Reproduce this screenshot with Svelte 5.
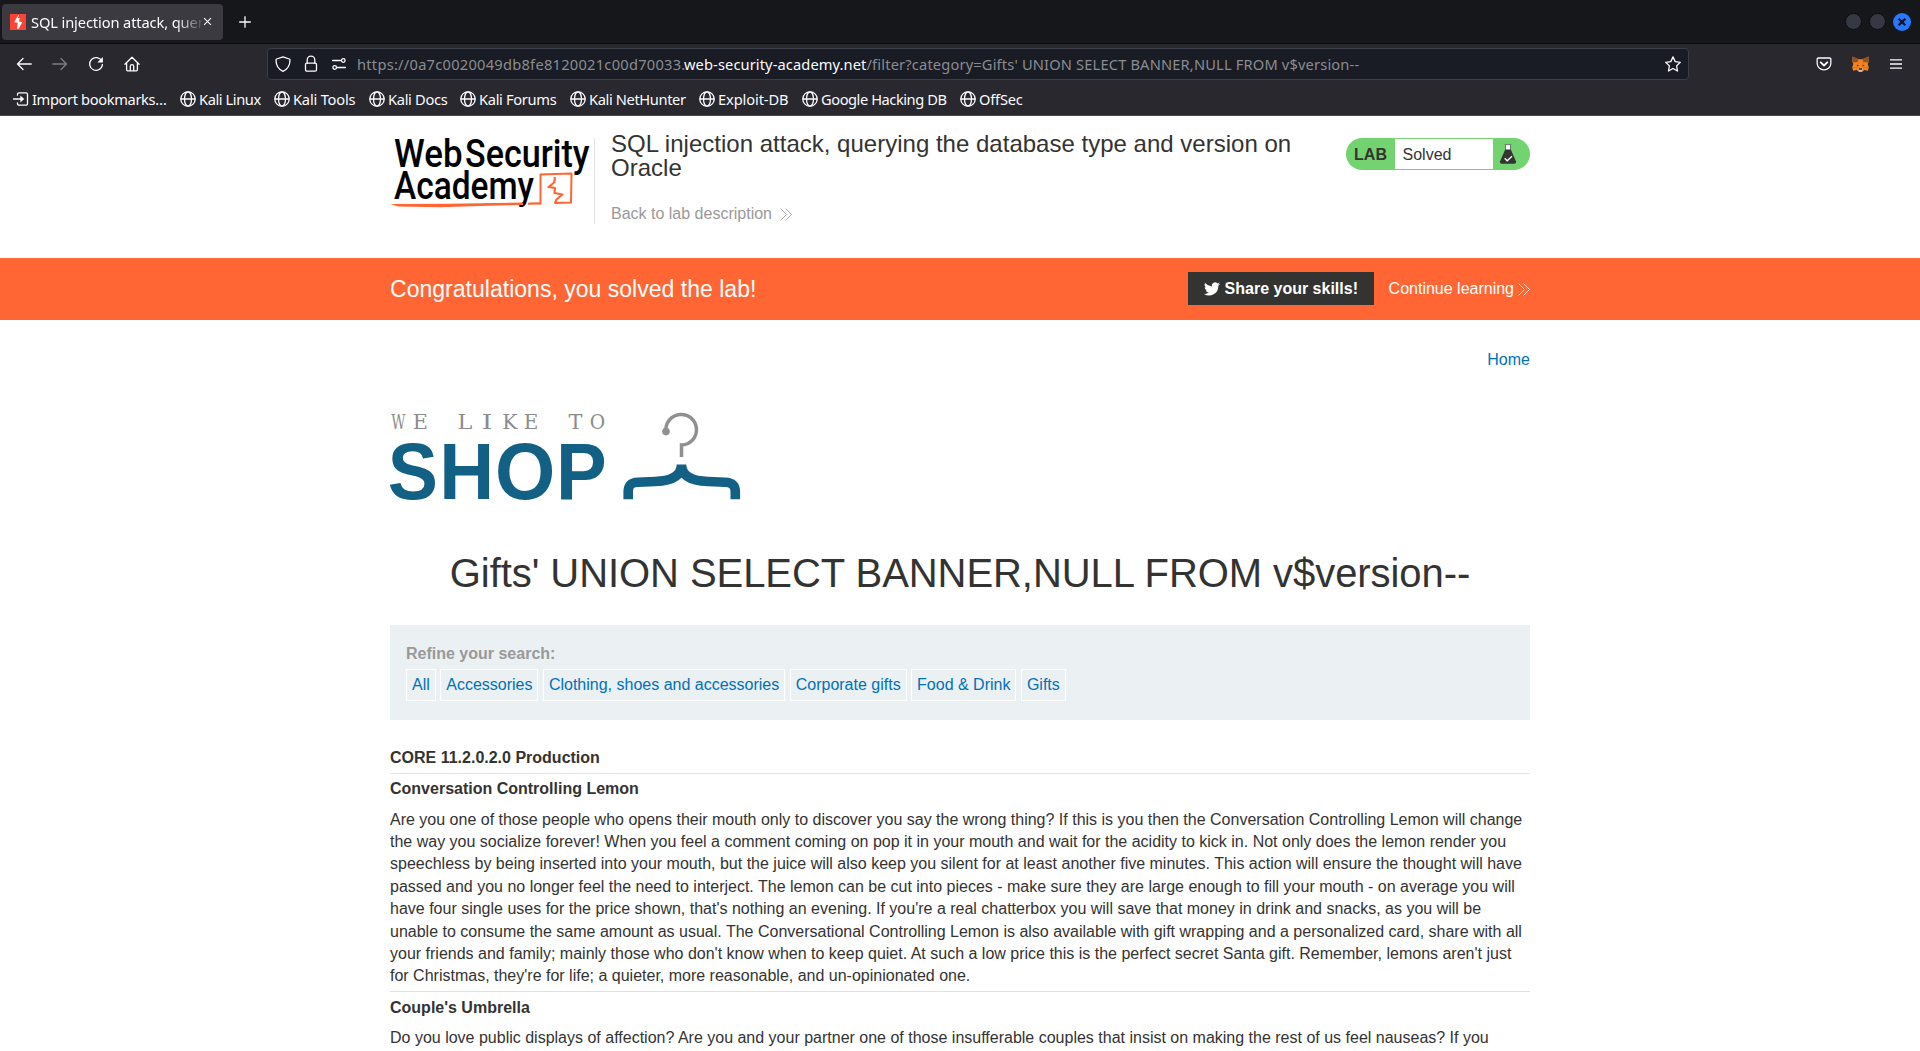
<script>
  const bookmarks = [
    { label: 'Kali Linux', width: 94, spacing: -0.42 },
    { label: 'Kali Tools', width: 95, spacing: -0.2 },
    { label: 'Kali Docs', width: 91, spacing: -0.32 },
    { label: 'Kali Forums', width: 110, spacing: -0.33 },
    { label: 'Kali NetHunter', width: 129, spacing: -0.38 },
    { label: 'Exploit-DB', width: 103, spacing: -0.12 },
    { label: 'Google Hacking DB', width: 158, spacing: -0.45 },
    { label: 'OffSec', width: 64, spacing: -0.2 }
  ];

  const tagline = [
    { char: 'W', x: 1.3, width: 14.2 },
    { char: 'E', x: 22.8, width: 15.2 },
    { char: 'L', x: 67.5, width: 14.8 },
    { char: 'I', x: 91.7, width: 10.6 },
    { char: 'K', x: 112.2, width: 15.2 },
    { char: 'E', x: 133.7, width: 14.6 },
    { char: 'T', x: 178.5, width: 14 },
    { char: 'O', x: 199.8, width: 15.4 }
  ];

  const wordmark = [
    { char: 'S', x: -2.3, width: 50.2 },
    { char: 'H', x: 49.2, width: 54.9 },
    { char: 'O', x: 105.1, width: 60.3 },
    { char: 'P', x: 165.9, width: 50.7 }
  ];

  const categories = ['All', 'Accessories', 'Clothing, shoes and accessories', 'Corporate gifts', 'Food & Drink', 'Gifts'];

  const lemon = [
    'Are you one of those people who opens their mouth only to discover you say the wrong thing? If this is you then the Conversation Controlling Lemon will change',
    'the way you socialize forever! When you feel a comment coming on pop it in your mouth and wait for the acidity to kick in. Not only does the lemon render you',
    'speechless by being inserted into your mouth, but the juice will also keep you silent for at least another five minutes. This action will ensure the thought will have',
    'passed and you no longer feel the need to interject. The lemon can be cut into pieces - make sure they are large enough to fill your mouth - on average you will',
    "have four single uses for the price shown, that's nothing an evening. If you're a real chatterbox you will save that money in drink and snacks, as you will be",
    'unable to consume the same amount as usual. The Conversational Controlling Lemon is also available with gift wrapping and a personalized card, share with all',
    "your friends and family; mainly those who don't know when to keep quiet. At such a low price this is the perfect secret Santa gift. Remember, lemons aren't just",
    "for Christmas, they're for life; a quieter, more reasonable, and un-opinionated one."
  ].join(' ');

  const umbrella =
    'Do you love public displays of affection? Are you and your partner one of those insufferable couples that insist on making the rest of us feel nauseas? If you';
</script>

<div class="window">
  <div class="tabbar">
    <div class="tab">
      <svg class="favicon" viewBox="0 0 16 16">
        <rect width="16" height="16" fill="#ff4136" />
        <path d="M8.2 1 4.2 8.2l3.6.5L7 15l1.7-.2 3.600-6.600-3.200-.7L9.700 4H7.800L9 1z" fill="#fff" />
      </svg>
      <span class="tab-title">SQL injection attack, query</span>
      <svg class="tab-close" viewBox="0 0 10 10"><path d="m1.2 1.2 7.6 7.6m0-7.6-7.6 7.6" /></svg>
    </div>
    <svg class="new-tab" viewBox="0 0 12 12"><path d="M6 .2v11.6M.2 6h11.6" /></svg>
    <div class="controls">
      <i></i><i></i>
      <svg viewBox="0 0 18 18">
        <circle cx="9" cy="9" r="9" fill="#2777ff" />
        <path d="m5.7 5.7 6.6 6.6m0-6.6-6.6 6.6" stroke="#0d1526" stroke-width="2.3" />
      </svg>
    </div>
  </div>

  <div class="navbar">
    <div class="nav-buttons">
      <svg viewBox="0 0 16 16"><path d="M15.2 8H1.5M7 2.5 1.5 8 7 13.5" /></svg>
      <svg viewBox="0 0 16 16" class="dim"><path d="M.8 8h13.7M9 2.5 14.500 8 9 13.5" /></svg>
      <svg viewBox="0 0 16 16">
        <path d="M13.8 5.200A6.400 6.400 0 1 0 14.400 8.500" />
        <path d="M14.900 1v5.600H9.300z" class="solid" />
      </svg>
      <svg viewBox="0 0 16 16">
        <path d="M.9 8.300 8 1.200l7.100 7.100M2.600 7v6.800a1 1 0 0 0 1 1h8.800a1 1 0 0 0 1-1V7M6.300 14.500v-4.200a1.700 1.700 0 0 1 3.400 0v4.200" />
      </svg>
    </div>
    <div class="urlbar">
      <svg viewBox="0 0 16 16" class="shield"><path d="M8 .8 14.300 3c.6.2.7.5.7 1-.1 5.500-2.200 9.300-7 11.300C3.200 13.300 1.100 9.500 1 4c0-.5.1-.8.7-1z" /></svg>
      <svg viewBox="0 0 16 16" class="lock"><path d="M4.200 7.200V4a3.800 3.800 0 0 1 7.600 0v3.200" /><rect x="2.500" y="7.200" width="11" height="8" rx="1.400" /></svg>
      <svg viewBox="0 0 16 16" class="perms"><path d="M1.500 4.500H10M6 11.500h8.500" /><circle cx="12.300" cy="4.500" r="1.800" /><circle cx="3.700" cy="11.500" r="1.800" /></svg>
      <div class="url"><span class="u1">https://0a7c0020049db8fe8120021c00d70033.</span><span class="u2">web-security-academy.net</span><span class="u3">/filter?category=Gifts' UNION SELECT BANNER,NULL FROM v$version--</span></div>
      <svg viewBox="0 0 16 16" class="star"><path d="m8 .9 2.200 4.700 5.100.7-3.700 3.600.9 5.100L8 12.500 3.500 15l.9-5.100L.7 6.300l5.100-.7z" /></svg>
    </div>
    <div class="tools">
      <svg viewBox="0 0 16 16" class="pocket"><path d="M2.300 2h11.400a1.100 1.100 0 0 1 1.100 1.100V7.500a6.800 6.300 0 0 1-13.600 0V3.100A1.100 1.100 0 0 1 2.300 2z" /><path d="M4.700 6.300 8 9.500l3.300-3.200" stroke-width="1.800" /></svg>
      <svg viewBox="0 0 17 16" class="fox">
        <path d="M.6.600 6.300 3.200h4.400L16.400.6l.3 5-1 2.400 1.100 3.500-1 3.300-3.500-.9-2 1.900H6.700l-2-1.900-3.500.9-1-3.300L1.300 8 .3 5.600z" fill="#f5841f" />
        <path d="M.6.600 6.300 3.200 5.700 6 1.500 6.600.3 5.600zM16.400.6l-5.700 2.600.6 2.800 4.200.6 1.200-1z" fill="#92502a" />
        <path d="m6.300 3.200-.8 8.600-4.400-.3M10.700 3.200l.8 8.600 4.400-.3" fill="none" stroke="#d76a18" stroke-width=".7" />
        <path d="m4.300 8.900 2.200.1-.3 1.200zm8.400 0-2.200.1.3 1.200z" fill="#3b2a20" />
        <path d="m6.700 12.500.5-.5h2.600l.5.5.2 2.400-.8.900H7.300l-.8-.9z" fill="#d5c5b6" />
        <path d="M7 12.200h3l.2 1.500H6.800z" fill="#242020" />
      </svg>
      <svg viewBox="0 0 12 10" class="menu"><path d="M0 .8h12M0 5h12M0 9.200h12" /></svg>
    </div>
  </div>

  <div class="bookmarks">
    <div class="bookmark import">
      <svg viewBox="0 0 16 16"><path d="M4.500 4.200V3.300A1.500 1.500 0 0 1 6 1.800h7a1.500 1.500 0 0 1 1.500 1.500v9.400a1.500 1.500 0 0 1-1.500 1.500H6a1.500 1.500 0 0 1-1.500-1.500v-.9M.5 8H9" /><path d="M7.300 4.600 11.300 8l-4 3.400z" class="solid" /></svg>
      <span>Import bookmarks…</span>
    </div>
    {#each bookmarks as item}
      <div class="bookmark" style:width="{item.width}px" style:letter-spacing="{item.spacing}px">
        <svg viewBox="0 0 16 16"><circle cx="8" cy="8" r="7.200" /><ellipse cx="8" cy="8" rx="3.500" ry="7.200" /><path d="M1 8h14" /></svg>
        <span>{item.label}</span>
      </div>
    {/each}
  </div>

  <div class="page">
    <header class="container lab-header">
      <svg class="logo" viewBox="0 0 200 72">
        <g font-family="Roboto" font-weight="500" font-size="38.500" fill="#000">
          <text x="4" y="29" textLength="68.500" lengthAdjust="spacingAndGlyphs">Web</text>
          <text x="75" y="29" textLength="124.500" lengthAdjust="spacingAndGlyphs">Security</text>
          <text x="4" y="61" textLength="140" lengthAdjust="spacingAndGlyphs">Academy</text>
        </g>
        <g fill="none" stroke="#ff6633" stroke-width="1.800" stroke-linejoin="round">
          <path d="M150.500 66.500V36.500l31-1-.5 29-16.500.5" stroke-width="2" />
          <path d="m165 39-.8 5.500-5.700 4.500 6.500 1-.5 5 8 1.500-6 5-1.500 3.500" stroke-width="2.200" />
        </g>
        <path d="M.5 66 60 65.800l73-1.300v2.500L90 67.900 50 69.200 8 68.500zM138.500 64.500l12-.3v2.400l-13 .2z" fill="#ff6633" />
      </svg>
      <div class="title">
        <h2>SQL injection attack, querying the database type and version on Oracle</h2>
        <a class="back">Back to lab description <svg viewBox="0 0 12 13"><path d="m.5.500 6 6-6 6M5.500.500l6 6-6 6" /></svg></a>
      </div>
      <div class="lab-status">
        <b>LAB</b>
        <span>Solved</span>
        <svg viewBox="0 0 16 20"><path d="M5.500 1v6L1 17.500h14L10.500 7V1" fill="#fff" /><path d="M4.700.6h6.600M5.500 1v5M10.500 1v5" stroke="#777" stroke-width="1" /><path d="M5.200 5.500h5.600L16 17.500q.5 2-1.500 2.200h-13Q-.5 19.500 0 17.500z" fill="#333332" /><path d="m4.700 14.300 2.500 2.500 4.800-4.600" fill="none" stroke="#fff" stroke-width="1.300" /></svg>
      </div>
    </header>

    <section class="banner">
      <div class="container banner-inner">
        <h4>Congratulations, you solved the lab!</h4>
        <div class="banner-actions">
          <a class="share"><svg viewBox="0 0 24 20"><path d="M24 2.400a10 10 0 0 1-2.800.8A5 5 0 0 0 23.300.400a10 10 0 0 1-3.100 1.200 4.900 4.900 0 0 0-8.400 4.500A14 14 0 0 1 1.700 1a4.900 4.900 0 0 0 1.500 6.500A4.900 4.900 0 0 1 1 6.900a4.900 4.900 0 0 0 3.900 4.900 5 5 0 0 1-2.200.1 4.900 4.900 0 0 0 4.600 3.400A9.900 9.900 0 0 1 0 17.400a14 14 0 0 0 21.500-12.400A10 10 0 0 0 24 2.400z" fill="#fff" /></svg>Share your skills!</a>
          <a class="continue">Continue learning<svg viewBox="0 0 12 13"><path d="m.5.500 6 6-6 6M5.500.500l6 6-6 6" /></svg></a>
        </div>
      </div>
    </section>

    <main class="container">
      <nav class="top-links"><a>Home</a></nav>
      <svg class="shop" viewBox="0 0 352 90">
        <g font-family="DejaVu Serif" font-size="20.500" fill="#8c8c8c">
          {#each tagline as letter}<text y="17" x={letter.x} textLength={letter.width} lengthAdjust="spacingAndGlyphs">{letter.char}</text>{/each}
        </g>
        <g font-family="Liberation Sans" font-weight="700" font-size="80" fill="#126084">
          {#each wordmark as letter}<text y="87.300" x={letter.x} textLength={letter.width} lengthAdjust="spacingAndGlyphs">{letter.char}</text>{/each}
        </g>
        <circle cx="276" cy="19.600" r="3.800" fill="#8e9091" />
        <path d="M276 19.600A15.300 15.300 0 1 1 291.500 33V45" fill="none" stroke="#8e9091" stroke-width="3.500" />
        <path d="M238.200 87.300V80C238.200 73 241 70.500 248 70.200L265 69.500C281 69 291.500 64 291.500 52.500 291.500 64 302 69 318 69.500L335 70.200C342 70.500 345.300 73 345.300 80V87.300" fill="none" stroke="#126084" stroke-width="9.600" stroke-linejoin="bevel" />
      </svg>
      <h1>Gifts' UNION SELECT BANNER,NULL FROM v$version--</h1>
      <section class="filters">
        <label>Refine your search:</label>
        <div class="links">
          {#each categories as category}<a>{category}</a>{/each}
        </div>
      </section>
      <div class="results">
        <div class="name">CORE 11.2.0.2.0 Production</div>
        <div class="name ruled">Conversation Controlling Lemon</div>
        <div class="text">{lemon}</div>
        <div class="name ruled">Couple's Umbrella</div>
        <div class="text">{umbrella}</div>
      </div>
    </main>
  </div>
</div>

<style>
  :global(body) { overflow: hidden; background: #fff; }
  .window { width: 1920px; height: 1051px; overflow: hidden; display: flex; flex-direction: column; font-family: 'Noto Sans', sans-serif; font-size: 14.67px; color: #fbfbfe; }
  .window * { box-sizing: border-box; }
  svg { display: block; flex: none; fill: none; overflow: visible; }
  .tabbar { height: 44px; flex: none; background: #16171b; border-bottom: 1px solid #0c0c0e; display: flex; align-items: center; padding: 0 9px 0 2px; }
  .tab { width: 221px; height: 36px; background: #3a3a40; border-radius: 4px; display: flex; align-items: center; padding: 0 11px 0 8px; }
  .favicon { width: 16px; height: 16px; }
  .tab-title { margin-left: 5px; width: 171px; flex: none; overflow: hidden; white-space: nowrap; line-height: 22px; letter-spacing: -.12px; mask-image: linear-gradient(to right, #000 145px, transparent 174px); margin-right: 1px; padding-top: 1px; }
  .tab-close { width: 9px; height: 9px; stroke: #fbfbfe; stroke-width: 1.2; }
  .new-tab { width: 12px; height: 12px; margin-left: 15.500px; stroke: #fbfbfe; stroke-width: 1.3; }
  .controls { margin-left: auto; display: flex; align-items: center; gap: 7px; }
  .controls i { width: 17px; height: 17px; border-radius: 50%; background: #363844; border: 1px solid #0c0c0e; }
  .controls svg { width: 18px; height: 18px; }
  .navbar { height: 40px; flex: none; background: #28282e; display: flex; align-items: center; padding: 0 18px 0 16px; }
  .nav-buttons { display: flex; gap: 20px; width: 251px; }
  .nav-buttons svg, .urlbar svg, .tools svg, .bookmark svg { width: 16px; height: 16px; stroke: #fbfbfe; stroke-width: 1.3; stroke-linejoin: round; stroke-linecap: round; }
  .nav-buttons .dim { opacity: .4; }
  .nav-buttons svg .solid, .bookmark svg .solid { fill: #fbfbfe; stroke: none; }
  .urlbar { width: 1422px; height: 32px; border: 1px solid #3b3e48; border-radius: 4px; background: #191c24; display: flex; align-items: center; padding: 0 7px; gap: 12px; }
  .url { display: flex; white-space: pre; color: #8b8c91; line-height: 22px; width: 1310px; margin-left: -2px; }
  .u1 { width: 327px; flex: none; letter-spacing: .25px; }
  .u2 { width: 182.500px; flex: none; color: #fbfbfe; letter-spacing: .1px; }
  .u3 { letter-spacing: .16px; }
  .tools { margin-left: auto; display: flex; align-items: center; }
  .tools .fox { width: 17px; height: 16px; stroke: none; margin: 0 21px 0 20px; }
  .tools .menu { width: 12px; height: 10px; stroke-linecap: butt; }
  .bookmarks { height: 32px; flex: none; background: #28282e; border-bottom: 1px solid #45464e; display: flex; align-items: center; padding: 0 0 2px 12.5px; white-space: nowrap; }
  .bookmark { display: flex; align-items: center; gap: 3.5px; flex: none; line-height: 22px; }
  .import { width: 167px; letter-spacing: -.37px; }
  .page { flex: 1; background: #fff; color: #333332; font-family: 'Liberation Sans', Arial, sans-serif; font-size: 16px; line-height: 22.4px; }
  .container { width: 1140px; margin: 0 auto; }
  .lab-header { height: 142px; display: flex; align-items: flex-start; padding-top: 16px; }
  .logo { width: 200px; height: 72px; margin-top: 6px; }
  .title { margin-left: 4px; padding-left: 17px; width: 752px; position: relative; }
  .title::before { content: ''; position: absolute; left: 0; top: 6px; width: 1px; height: 86px; background: #e2e2e2; }
  h2 { margin: 0; font-size: 24px; line-height: 24px; font-weight: 400; width: 700px; letter-spacing: .01px; }
  .back { display: flex; align-items: center; gap: 8px; color: #999; margin-top: 23px; }
  .back svg, .continue svg { width: 12px; height: 13px; stroke: currentColor; stroke-width: .8; }
  .lab-status { width: 184px; height: 32px; margin-top: 6px; border-radius: 16px; background: #74d371; display: flex; align-items: center; }
  .lab-status b { width: 49px; text-align: center; padding-top: 3px; }
  .lab-status span { width: 98px; height: 30px; background: #fff; line-height: 32px; padding-left: 7.5px; }
  .lab-status svg { width: 16px; height: 20px; margin-left: 7px; }
  .banner { height: 62px; background: #ff6633; color: #fff; }
  .banner-inner { height: 61px; display: flex; align-items: center; justify-content: space-between; }
  h4 { margin: 0; font-weight: 400; font-size: 23px; letter-spacing: .02px; padding-top: 1px; }
  .banner-actions { display: flex; align-items: center; gap: 15px; }
  .share { width: 186px; height: 33px; background: #333332; font-weight: 700; display: flex; align-items: center; padding: 1px 0 0 16px; gap: 5px; white-space: nowrap; }
  .share svg { width: 16px; height: 14px; }
  .continue { display: flex; align-items: center; gap: 4px; padding-top: 2px; }
  .top-links { height: 72px; padding-top: 29px; text-align: right; color: #0071b8; }
  .shop { width: 352px; height: 90px; margin-top: 20px; }
  h1 { margin: 48px 0 0; font-size: 40px; line-height: 46px; font-weight: 400; text-align: center; letter-spacing: -.06px; }
  .filters { margin-top: 29px; height: 95px; background: #ebf0f3; padding: 18px 16px; }
  label { display: block; font-weight: 700; color: #999; line-height: 22px; }
  .links { display: flex; gap: 4.45px; margin-top: 4px; }
  .links a { height: 32px; line-height: 29px; border: 1px solid #fff; padding: 0 5px; color: #0071b8; white-space: nowrap; }
  .results { margin-top: 27px; }
  .name { font-weight: 700; padding-bottom: 3.5px; }
  .ruled { border-top: 1px solid #e2e2e2; padding-top: 4.5px; }
  .text { padding: 4.3px 0 3.2px; }
</style>
